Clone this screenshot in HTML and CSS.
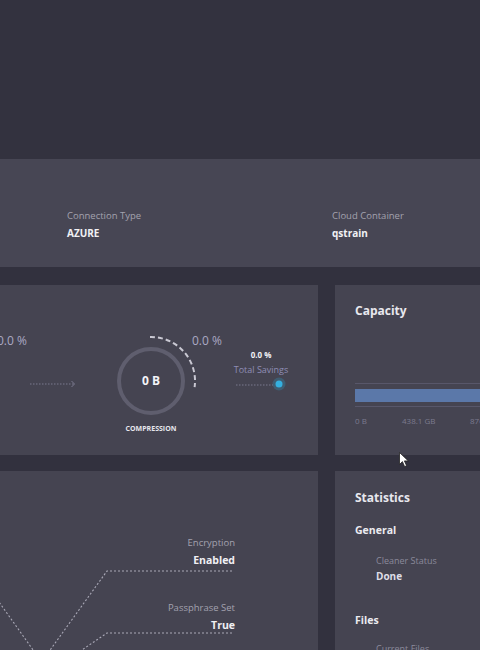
FILE: index.html
```html
<!DOCTYPE html>
<html>
<head>
<meta charset="utf-8">
<link rel="stylesheet" href="styles.css">
</head>
<body>
<div class="page">
  <div class="hero"></div>

  <div class="info-bar">
    <div class="info-item">
      <div class="label">Connection Type</div>
      <div class="value">AZURE</div>
    </div>
    <div class="info-item">
      <div class="label">Cloud Container</div>
      <div class="value">qstrain</div>
    </div>
  </div>

  <div class="row row-mid">
    <div class="panel diagram">
      <svg class="diagram-svg" width="358" height="170" viewBox="0 0 358 170">
        <line x1="70" y1="99" x2="114" y2="99" stroke="#7a798e" stroke-width="1" stroke-dasharray="1.5 1.5"/>
        <polyline points="111.5,96 114.5,99 111.5,102" fill="none" stroke="#7a798e" stroke-width="1"/>
        <circle cx="191" cy="96" r="32" fill="none" stroke="#5f5e6e" stroke-width="4"/>
        <path d="M190 52 A44 44 0 0 1 234.6 102.1" fill="none" stroke="#c9c8d2" stroke-width="2" stroke-dasharray="5 3"/>
        <line x1="276" y1="100" x2="313" y2="100" stroke="#7a798e" stroke-width="1" stroke-dasharray="1.5 1.5"/>
        <circle cx="319" cy="99" r="6.5" fill="#2ea6d6" opacity="0.25"/>
        <circle cx="319" cy="99" r="3.5" fill="#35b0e0"/>
      </svg>
      <div class="pct pct-a">0.0 %</div>
      <div class="pct pct-b">0.0 %</div>
      <div class="gauge-value">0 B</div>
      <div class="gauge-label">COMPRESSION</div>
      <div class="savings">
        <div class="savings-pct">0.0 %</div>
        <div class="savings-label">Total Savings</div>
      </div>
    </div>

    <div class="panel capacity">
      <div class="panel-title">Capacity</div>
      <div class="bar-track">
        <div class="bar-fill"></div>
      </div>
      <div class="bar-scale">
        <span class="tick tick-1">0 B</span>
        <span class="tick tick-2">438.1 GB</span>
        <span class="tick">876.2 GB</span>
      </div>
    </div>
  </div>

  <div class="row row-bottom">
    <div class="panel security">
      <svg class="security-svg" width="358" height="200" viewBox="0 0 358 200">
        <path d="M272 100 H147 L75 200" fill="none" stroke="#a9a8b6" stroke-width="1.1" stroke-dasharray="2 2"/>
        <path d="M272 162 H147 L91 200" fill="none" stroke="#a9a8b6" stroke-width="1.1" stroke-dasharray="2 2"/>
        <path d="M0 76 L88 200" fill="none" stroke="#a9a8b6" stroke-width="1.1" stroke-dasharray="2 2"/>
      </svg>
      <div class="sec-list">
        <div class="sec-item">
          <div class="sec-label">Encryption</div>
          <div class="sec-value">Enabled</div>
        </div>
        <div class="sec-item">
          <div class="sec-label">Passphrase Set</div>
          <div class="sec-value">True</div>
        </div>
      </div>
    </div>

    <div class="panel stats">
      <div class="panel-title">Statistics</div>
      <div class="stats-section">General</div>
      <div class="stat">
        <div class="stat-label">Cleaner Status</div>
        <div class="stat-value">Done</div>
      </div>
      <div class="stats-section files">Files</div>
      <div class="stat stat-files">
        <div class="stat-label">Current Files</div>
        <div class="stat-value">0</div>
      </div>
    </div>
  </div>
</div>

<svg class="cursor" width="11" height="16" viewBox="0 0 11 16">
  <path d="M0.5 0.5 L0.5 12.5 L3.4 9.6 L5.6 14.6 L7.6 13.7 L5.4 8.9 L9.3 8.9 Z" fill="#ffffff" stroke="#222" stroke-width="0.8"/>
</svg>
</body>
</html>
```

FILE: styles.css
```css
html, body {
  margin: 0;
  padding: 0;
}

body {
  width: 480px;
  height: 650px;
  overflow: hidden;
  background: #32313e;
  font-family: "Open Sans", "Liberation Sans", sans-serif;
  position: relative;
}

.page {
  width: 540px;
  margin-left: -40px;
}

.hero {
  height: 159px;
  background: #33323f;
}

.info-bar {
  height: 108px;
  box-sizing: border-box;
  background: #474654;
  padding: 50px 0 0 107px;
  display: flex;
}

.info-item {
  width: 265px;
  flex-shrink: 0;
}

.label {
  font-size: 9.5px;
  line-height: 14px;
  color: #a3a2ae;
}

.value {
  font-size: 10px;
  line-height: 14px;
  font-weight: 700;
  color: #f1f1f5;
  margin-top: 3px;
}

.row {
  display: grid;
  grid-template-columns: 358px 165px;
  column-gap: 17px;
}

.row-mid {
  margin-top: 18px;
  height: 170px;
}

.row-bottom {
  margin-top: 16px;
  height: 200px;
}

.panel {
  background: #454451;
  position: relative;
  box-sizing: border-box;
}

/* diagram panel */
.diagram-svg,
.security-svg {
  position: absolute;
  left: 0;
  top: 0;
}

.pct {
  position: absolute;
  top: 48px;
  font-size: 12px;
  line-height: 16px;
  color: #aaa9c3;
}

.pct-a { left: 37px; }
.pct-b { left: 232px; }

.gauge-value {
  position: absolute;
  left: 161px;
  width: 60px;
  top: 88px;
  text-align: center;
  font-size: 12px;
  line-height: 16px;
  font-weight: 700;
  color: #f4f4f8;
}

.gauge-label {
  position: absolute;
  left: 146px;
  width: 90px;
  top: 139px;
  text-align: center;
  font-size: 7px;
  line-height: 10px;
  font-weight: 700;
  color: #e6e6ec;
}

.savings {
  position: absolute;
  left: 255px;
  width: 92px;
  top: 65px;
  display: flex;
  flex-direction: column;
  align-items: center;
}

.savings-pct {
  font-size: 8px;
  line-height: 10px;
  font-weight: 700;
  color: #f2f2f6;
}

.savings-label {
  margin-top: 2.5px;
  font-size: 9px;
  line-height: 13px;
  color: #8f8db5;
}

/* capacity */
.capacity,
.stats {
  padding: 18px 0 0 20px;
}

.panel-title {
  font-size: 12px;
  line-height: 16px;
  font-weight: 700;
  color: #e8e8ee;
}

.bar-track {
  margin-top: 64px;
  border-top: 1px solid #58576a;
  border-bottom: 1px solid #58576a;
  padding: 5px 0 4px;
}

.bar-fill {
  height: 13px;
  background: #5b78a9;
}

.bar-scale {
  margin-top: 9px;
  display: flex;
  font-size: 8px;
  line-height: 10px;
  color: #7b7a8e;
}

.tick {
  white-space: nowrap;
  flex-shrink: 0;
}

.tick-1 { width: 47px; }
.tick-2 { width: 68px; }

/* security */
.sec-list {
  position: relative;
  padding: 65px 83px 0 0;
  display: flex;
  flex-direction: column;
  align-items: flex-end;
  row-gap: 34px;
}

.sec-item {
  text-align: right;
}

.sec-label {
  font-size: 9.5px;
  line-height: 14px;
  color: #a3a2af;
}

.sec-value {
  margin-top: 3px;
  font-size: 10.5px;
  line-height: 14px;
  font-weight: 700;
  color: #f0f0f4;
}

/* statistics */
.stats {
  padding-top: 19px;
}

.stats-section {
  margin-top: 17px;
  font-size: 10.5px;
  line-height: 14px;
  font-weight: 700;
  color: #ebebf0;
}

.stats-section.files {
  margin-top: 30px;
}

.stat {
  margin-top: 16.5px;
  padding-left: 21px;
}

.stat-files {
  margin-top: 14.5px;
}

.stat-label {
  font-size: 9px;
  line-height: 13px;
  color: #8b8a9b;
}

.stat-value {
  margin-top: 2.5px;
  font-size: 10px;
  line-height: 14px;
  font-weight: 700;
  color: #dedde6;
}

.cursor {
  position: absolute;
  left: 399px;
  top: 452px;
}
```
